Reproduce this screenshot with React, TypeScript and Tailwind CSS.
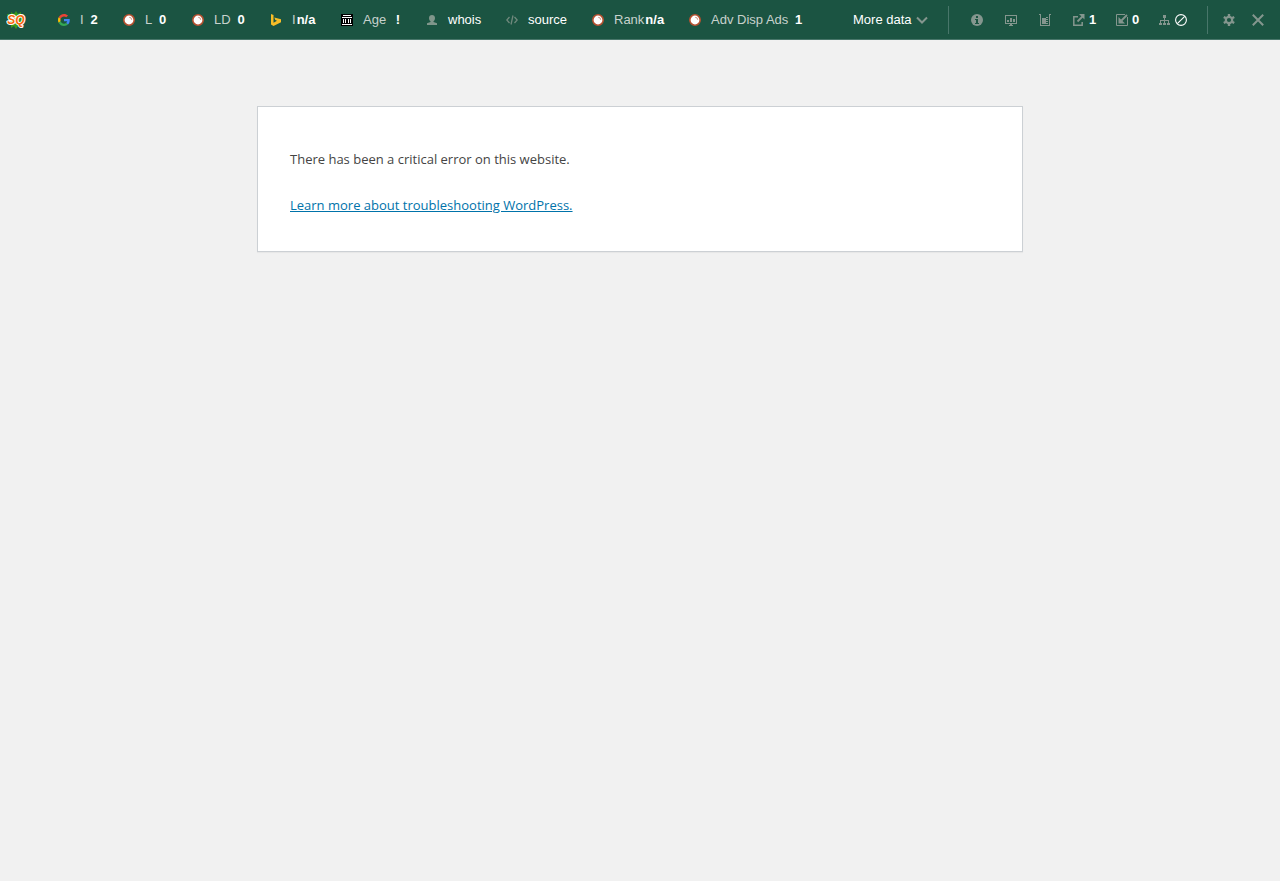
import type { ReactNode } from "react";

const GoogleIcon = () => (
  <svg viewBox="0 0 48 48" className="size-3" aria-hidden="true">
    <path fill="#ea4335" d="M24 9.5c3.5 0 6.700 1.200 9.200 3.600l6.900-6.900C35.900 2.400 30.500 0 24 0 14.600 0 6.500 5.400 2.600 13.200l8 6.200C12.400 13.700 17.700 9.500 24 9.500z" />
    <path fill="#4285f4" d="M47 24.600c0-1.600-.2-3.100-.4-4.600H24v9h12.900c-.6 3-2.300 5.500-4.800 7.200l7.700 6C44.400 38 47 31.800 47 24.600z" />
    <path fill="#fbbc05" d="M10.500 28.600c-.5-1.500-.8-3-.8-4.600s.3-3.100.8-4.600l-8-6.200C.9 16.500 0 20.100 0 24s.9 7.500 2.600 10.800z" />
    <path fill="#34a853" d="M24 48c6.500 0 11.900-2.100 15.900-5.800l-7.700-6c-2.200 1.500-4.900 2.300-8.200 2.300-6.300 0-11.600-4.200-13.500-9.900l-8 6.200C6.500 42.600 14.600 48 24 48z" />
  </svg>
);

const SemrushIcon = () => (
  <svg viewBox="0 0 12 12" className="size-3" aria-hidden="true">
    <circle cx="6" cy="6" r="5.200" fill="#fff" stroke="#b5502f" strokeWidth="1.600" />
    <path d="M6.200 3.300a2.500 2.500 0 0 1 2.500 2.500" fill="none" stroke="#c98a74" strokeWidth=".9" />
  </svg>
);

const BingIcon = () => (
  <svg viewBox="0 0 12 12" className="size-3" aria-hidden="true">
    <path fill="#f8bd27" d="M1 0l2.500 1v7.800l3.500-2-1.700-.8-1-2.500L11 5.300v3L3.500 12 1 10.500z" />
  </svg>
);

const ArchiveIcon = () => (
  <svg viewBox="0 0 12 12" className="size-3" aria-hidden="true">
    <path fill="#000" d="M0 0h12v12H0z" />
    <path fill="#fff" d="M2 1h8v1H2zM1 3h10v1H1zM2 5h1v4H2zM4 5h1v4H4zM7 5h1v4H7zM9 5h1v4H9zM1 10h10v1H1z" />
  </svg>
);

const PersonIcon = () => (
  <svg viewBox="0 0 12 12" className="size-3" fill="#80968b" aria-hidden="true">
    <path d="M6 1c1.800 0 3 1.100 3 2.900 0 1.500-.6 2.700-1.500 3.300v.8L11 9.300V11H1V9.300L4.500 8v-.8C3.600 6.600 3 5.400 3 3.900 3 2.100 4.200 1 6 1z" />
  </svg>
);

const CodeIcon = () => (
  <svg viewBox="0 0 12 12" className="size-3" fill="none" stroke="#70897d" strokeWidth="1.300" aria-hidden="true">
    <path d="M3.500 3L.8 6l2.700 3M8.500 3l2.700 3-2.700 3M7 1.500l-2 9" />
  </svg>
);

const SeoquakeLogo = () => (
  <svg viewBox="0 0 20 18" className="h-[18px] w-5" aria-hidden="true">
    <path fill="#399819" d="M5 1l3 2 2-3 2 3 3-2v3l3-1-1 4v6l-3 1-2 1-2 3-2-3-3 2v-3l-3-1V7L1 3h4z" />
    <text
      x="10"
      y="13"
      textAnchor="middle"
      fontFamily="Liberation Sans, sans-serif"
      fontSize="12"
      fontWeight="bold"
      fontStyle="italic"
      fill="#f8690f"
      stroke="#fff"
      strokeWidth="2"
      strokeLinejoin="round"
      paintOrder="stroke"
    >
      SQ
    </text>
  </svg>
);

const InfoIcon = () => (
  <svg viewBox="0 0 12 12" className="size-3" aria-hidden="true">
    <circle cx="6" cy="6" r="6" fill="#84968e" />
    <path fill="#1b5442" d="M5 2h2v2H5zM4 5h3v4h1v1H4V9h1V6H4z" />
  </svg>
);

const MonitorIcon = () => (
  <svg viewBox="0 0 12 12" className="size-3" fill="#84968e" aria-hidden="true">
    <path fillRule="evenodd" d="M0 1h12v9H0zM1 2v7h10V2z" />
    <path d="M2 6h2v2H2zM5 4h2v4H5zM8 5h2v3H8zM5 10h2v1h1v1H4v-1h1z" />
  </svg>
);

const BeakerIcon = () => (
  <svg viewBox="0 0 12 12" className="size-3" fill="#84968e" aria-hidden="true">
    <path d="M0 0h2v11h8V0h2v1h-1v11H1V1H0z" />
    <path d="M3 4h4V3h2v1H7v1h2v1H7v1h2v1H7v1h2v1H3z" />
  </svg>
);

const ExternalIcon = () => (
  <svg viewBox="0 0 12 12" className="size-3" fill="none" stroke="#84968e" aria-hidden="true">
    <path strokeWidth="1.500" d="M5 2.800H.8v8.400h8.400V8" />
    <path strokeWidth="1.800" d="M4.500 7.500l5-5" />
    <path fill="#84968e" stroke="none" d="M6 0h5.500v5.500z" />
  </svg>
);

const InternalIcon = () => (
  <svg viewBox="0 0 12 12" className="size-3" fill="none" stroke="#84968e" aria-hidden="true">
    <path strokeWidth="1" d="M9 .5H.5v11h11V3" />
    <path strokeWidth="1.800" d="M11 1L5.500 6.500" />
    <path fill="#84968e" stroke="none" d="M2.500 3v6.500H9z" />
  </svg>
);

const SitemapIcon = () => (
  <svg viewBox="0 0 12 12" className="size-3" fill="#84968e" aria-hidden="true">
    <path d="M4 1h3v3H6v2h4v3h1v2H8V9h1V7H6v2h1v2H4V9h1V7H2v2h1v2H0V9h1V6h4V4H4z" />
  </svg>
);

const BanIcon = () => (
  <svg viewBox="0 0 12 12" className="size-3" fill="none" stroke="#fff" strokeWidth="1.100" aria-hidden="true">
    <circle cx="6" cy="6" r="5.400" />
    <path d="M2.300 9.700l7.400-7.400" />
  </svg>
);

const GearIcon = () => (
  <svg viewBox="0 0 12 12" className="size-3" fill="none" stroke="#84968e" aria-hidden="true">
    <circle cx="6" cy="6" r="3.200" strokeWidth="2.200" />
    <path strokeWidth="2.400" d="M6 0v2.500M6 9.500V12M.8 3l2.200 1.300M9 7.700L11.200 9M.8 9L3 7.700M9 4.300L11.200 3" />
  </svg>
);

const CloseIcon = () => (
  <svg viewBox="0 0 12 12" className="size-3" fill="none" stroke="#84968e" strokeWidth="2" aria-hidden="true">
    <path d="M.8.8l10.400 10.400M11.200.8L.8 11.200" />
  </svg>
);

type Stat = {
  icon: ReactNode;
  label?: string;
  value: string;
  width: string;
};

const stats: Stat[] = [
  { icon: <GoogleIcon />, label: "I", value: "2", width: "w-[65px]" },
  { icon: <SemrushIcon />, label: "L", value: "0", width: "w-[69px]" },
  { icon: <SemrushIcon />, label: "LD", value: "0", width: "w-[78px]" },
  { icon: <BingIcon />, label: "I", value: "n/a", width: "w-[71px]" },
  { icon: <ArchiveIcon />, label: "Age", value: "!", width: "w-[85px]" },
  { icon: <PersonIcon />, value: "whois", width: "w-[80px]" },
  { icon: <CodeIcon />, value: "source", width: "w-[86px]" },
  { icon: <SemrushIcon />, label: "Rank", value: "n/a", width: "w-[97px]" },
  { icon: <SemrushIcon />, label: "Adv Disp Ads", value: "1", width: "w-[164px]" },
];

const Toolbar = () => (
  <header className="flex h-10 items-center border-b border-[#48766a] bg-[#1b5442] pr-4 pl-1.5 font-['Liberation_Sans',Arial,sans-serif] text-[13px] leading-5 whitespace-nowrap text-white">
    <a href="#seoquake" aria-label="SEOquake" className="mr-8 shrink-0">
      <SeoquakeLogo />
    </a>

    <nav className="flex">
      {stats.map((stat, i) => (
        <a key={i} href="#stat" className={`flex shrink-0 items-center ${stat.width}`}>
          <span className="mr-2.5 shrink-0">{stat.icon}</span>
          {stat.label ? (
            <>
              <span className="text-[#c8d2cd]">{stat.label}</span>
              <span className="min-w-3.5 pl-px text-right font-bold">{stat.value}</span>
            </>
          ) : (
            <span>{stat.value}</span>
          )}
        </a>
      ))}
    </nav>

    <button type="button" className="flex shrink-0 items-center gap-1">
      More data
      <svg viewBox="0 0 12 12" className="size-3" fill="none" stroke="#84968e" strokeWidth="2" aria-hidden="true">
        <path d="M1 3.500l5 5 5-5" />
      </svg>
    </button>

    <div className="ml-auto flex shrink-0 items-center">
      <div className="flex h-7 items-center border-l border-[#48766a] pl-[22px]">
        <button type="button" aria-label="Page info" className="mr-[22px]">
          <InfoIcon />
        </button>
        <button type="button" aria-label="Diagnosis" className="mr-[22px]">
          <MonitorIcon />
        </button>
        <button type="button" aria-label="Density" className="mr-[22px]">
          <BeakerIcon />
        </button>
        <button type="button" aria-label="External links" className="flex w-[43px] items-center gap-1 font-bold">
          <ExternalIcon />1
        </button>
        <button type="button" aria-label="Internal links" className="flex w-[43px] items-center gap-1 font-bold">
          <InternalIcon />0
        </button>
        <button type="button" aria-label="Sitemap" className="mr-5 flex items-center gap-1">
          <SitemapIcon />
          <BanIcon />
        </button>
      </div>
      <div className="flex h-7 items-center gap-[17px] border-l border-[#48766a] pl-[15px]">
        <button type="button" aria-label="Settings">
          <GearIcon />
        </button>
        <button type="button" aria-label="Close">
          <CloseIcon />
        </button>
      </div>
    </div>
  </header>
);

export default function App() {
  return (
    <div className="min-h-screen bg-[#f1f1f1]">
      <Toolbar />
      <main className="mx-auto mt-[66px] max-w-[766px] border border-[#ccd0d4] bg-white px-8 pt-[42px] pb-[35px] font-['Open_Sans',sans-serif] text-[13px] leading-[21px] text-[#444] shadow-[0_1px_1px_rgba(0,0,0,0.04)]">
        <p>There has been a critical error on this website.</p>
        <p className="mt-[25px]">
          <a href="https://wordpress.org/support/article/faq-troubleshooting/" className="text-[#0073aa] underline">
            Learn more about troubleshooting WordPress.
          </a>
        </p>
      </main>
    </div>
  );
}
